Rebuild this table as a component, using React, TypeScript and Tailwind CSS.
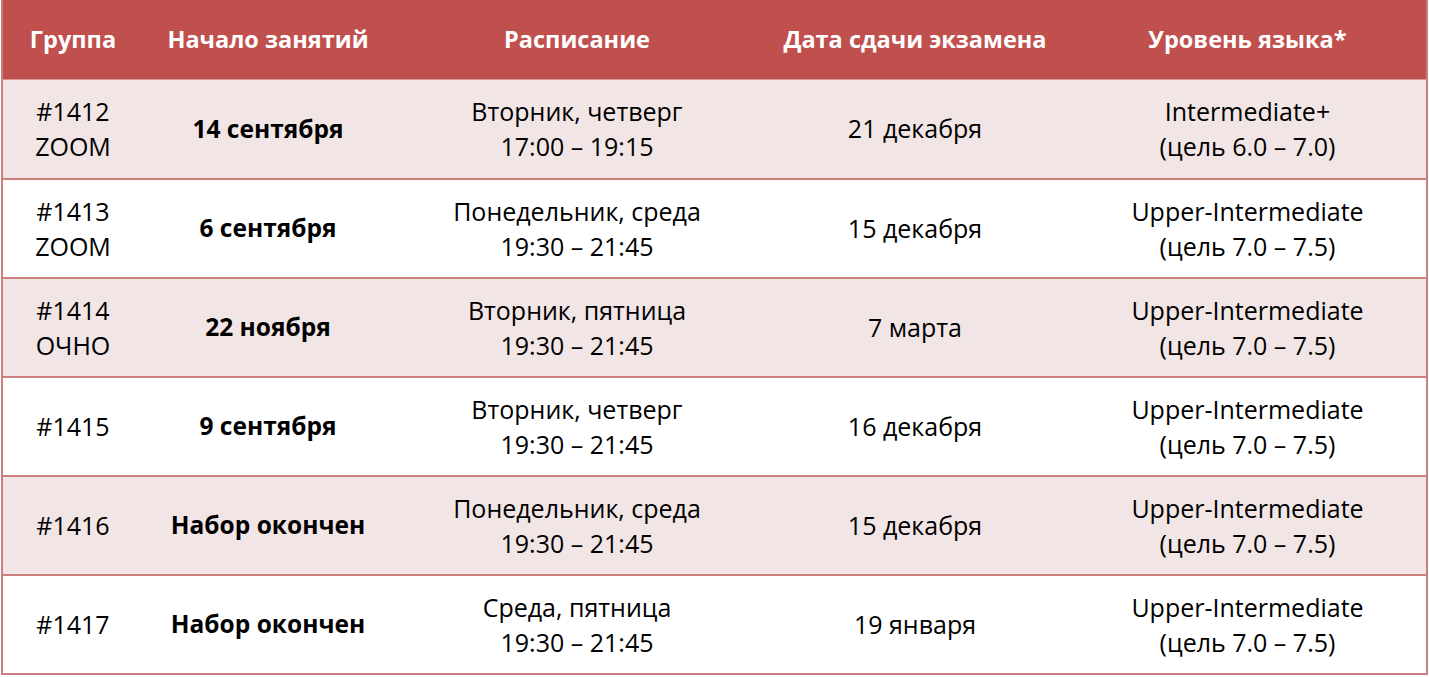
import React from 'react';

interface Row {
  group: string[];
  start: string;
  schedule: string[];
  exam: string;
  level: string[];
}

const rows: Row[] = [
  { group: ['#1412', 'ZOOM'], start: '14 сентября', schedule: ['Вторник, четверг', '17:00 – 19:15'], exam: '21 декабря', level: ['Intermediate+', '(цель 6.0 – 7.0)'] },
  { group: ['#1413', 'ZOOM'], start: '6 сентября', schedule: ['Понедельник, среда', '19:30 – 21:45'], exam: '15 декабря', level: ['Upper-Intermediate', '(цель 7.0 – 7.5)'] },
  { group: ['#1414', 'ОЧНО'], start: '22 ноября', schedule: ['Вторник, пятница', '19:30 – 21:45'], exam: '7 марта', level: ['Upper-Intermediate', '(цель 7.0 – 7.5)'] },
  { group: ['#1415'], start: '9 сентября', schedule: ['Вторник, четверг', '19:30 – 21:45'], exam: '16 декабря', level: ['Upper-Intermediate', '(цель 7.0 – 7.5)'] },
  { group: ['#1416'], start: 'Набор окончен', schedule: ['Понедельник, среда', '19:30 – 21:45'], exam: '15 декабря', level: ['Upper-Intermediate', '(цель 7.0 – 7.5)'] },
  { group: ['#1417'], start: 'Набор окончен', schedule: ['Среда, пятница', '19:30 – 21:45'], exam: '19 января', level: ['Upper-Intermediate', '(цель 7.0 – 7.5)'] },
];

const cols = 'grid grid-cols-[140px_250px_368px_308px_1fr]';

const Lines = ({ lines }: { lines: string[] }) => (
  <div className="flex flex-col items-center justify-center leading-[35px]">
    {lines.map((l, i) => (
      <span key={i}>{l}</span>
    ))}
  </div>
);

const App = () => {
  return (
    <div className="w-[1429px] h-[677px] bg-white pl-px font-['Open_Sans',sans-serif] text-[25px] text-black">
      <div className="w-[1427px] border-x-2 border-b-2 border-[#cd7f7d]">
        <div className={`${cols} h-[79px] items-center bg-[#c0504d] text-white font-bold text-[23.5px] text-center`}>
          <div>Группа</div>
          <div>Начало занятий</div>
          <div>Расписание</div>
          <div>Дата сдачи экзамена</div>
          <div>Уровень языка*</div>
        </div>
        {rows.map((r, i) => (
          <div
            key={i}
            className={`${cols} h-[99px] items-center text-center ${i > 0 ? 'border-t-2 border-[#cd7f7d]' : 'border-t border-[#d99593]'} ${i % 2 === 0 ? 'bg-[#f2e5e5]' : 'bg-white'}`}
          >
            <Lines lines={r.group} />
            <div className="font-bold text-[24.5px]">{r.start}</div>
            <Lines lines={r.schedule} />
            <div>{r.exam}</div>
            <Lines lines={r.level} />
          </div>
        ))}
      </div>
    </div>
  );
};

export default App;
